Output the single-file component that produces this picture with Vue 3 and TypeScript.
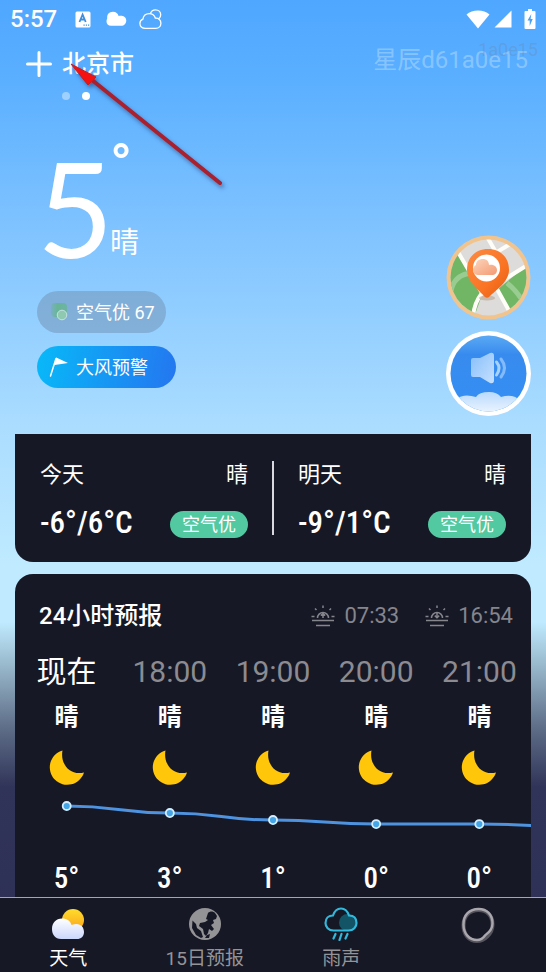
<script setup lang="ts">
import { computed } from 'vue'

interface Day {
  name: string
  sky: string
  range: string
  air: string
}

interface Hour {
  time: string
  sky: string
  temp: number
  y: number
}

const days: Day[] = [
  { name: '今天', sky: '晴', range: '-6°/6°C', air: '空气优' },
  { name: '明天', sky: '晴', range: '-9°/1°C', air: '空气优' },
]

const hours: Hour[] = [
  { time: '现在', sky: '晴', temp: 5, y: 7 },
  { time: '18:00', sky: '晴', temp: 3, y: 14 },
  { time: '19:00', sky: '晴', temp: 1, y: 21 },
  { time: '20:00', sky: '晴', temp: 0, y: 25 },
  { time: '21:00', sky: '晴', temp: 0, y: 25 },
]

const step = 103
const chartWidth = step * hours.length

const points = computed(() =>
  hours.map((h, i) => ({ x: step * i + step / 2, y: h.y })),
)

const curve = computed(() => {
  const all = [...points.value, { x: chartWidth + step / 2, y: 28 }]
  return all.reduce((d, p, i) => {
    if (i === 0) return `M${p.x} ${p.y}`
    const prev = all[i - 1]
    const mid = (prev.x + p.x) / 2
    return `${d} C${mid} ${prev.y} ${mid} ${p.y} ${p.x} ${p.y}`
  }, '')
})
</script>

<template>
  <div class="app">
    <div class="status">
      <span class="clock">5:57</span>
      <svg class="s-a" viewBox="0 0 16 17" width="16" height="17">
        <rect x="0.500" y="0.500" width="15" height="16" rx="1.500" fill="#fff" />
        <path d="M4.500 11 7.600 3.500 10.700 11M5.500 8.500h4.200" fill="none" stroke="#3f8fdc" stroke-width="1.800" />
        <path d="M8.500 14.200h1.200M10.800 14.200H12M13 14.200h1.200" stroke="#3f8fdc" stroke-width="1.200" />
      </svg>
      <svg class="s-cloud" viewBox="0 0 21 16" width="21" height="16">
        <path d="M5 14.800C2 14.800.500 12.500.500 10.400.500 9 1 8 1.300 7.300.600 3.600 3.300.800 7 .800c3 0 5 1.700 5.600 4.300 1-.500 2-.600 3.100-.300 2.700.300 4.600 2.200 4.600 4.700 0 3-2.200 5.300-5.100 5.300Z" fill="#fff" />
      </svg>
      <svg class="s-out" viewBox="0 0 23 21" width="23" height="21">
        <g fill="none" stroke="#fff" stroke-width="1.300">
          <path d="M6.200 19.300C3 19.300.900 17.200.900 14.600c0-2 1.200-3.700 3-4.400C4.400 6.800 7 4.700 10.200 4.700c3 0 5.300 1.800 6.200 4.500 3.300-.200 5.500 2 5.500 5 0 2.900-2.100 5.100-5.200 5.100Z" />
          <path d="M11.300 4.600C12.200 2 14.100.800 16.500.800c3 0 5.200 2.200 5.200 5 0 1.800-.700 3.100-1.900 4" />
        </g>
      </svg>
      <svg class="s-wifi" viewBox="0 0 24 19" width="24" height="19">
        <path d="M12 18.500.500 4.500C3.500 2 7.400.500 12 .500S20.500 2 23.500 4.500Z" fill="#fff" />
      </svg>
      <svg class="s-signal" viewBox="0 0 18 18" width="18" height="18">
        <path d="M17.500.500v17H.500Z" fill="#fff" />
      </svg>
      <svg class="s-battery" viewBox="0 0 12 20" width="12" height="20">
        <path d="M4 0h4v2h2.500a1 1 0 0 1 1 1v16a1 1 0 0 1-1 1h-9a1 1 0 0 1-1-1V3a1 1 0 0 1 1-1H4Z" fill="#fff" />
        <path d="M7.300 5 3.500 11.500h2.200V17L8.700 10H6.600Z" fill="#4d9ff0" />
      </svg>
    </div>

    <header class="header">
      <button class="add" type="button" aria-label="添加城市">
        <svg viewBox="0 0 26 26" width="26" height="26">
          <path d="M13 1.500v23M1.500 13h23" stroke="#fff" stroke-width="3" stroke-linecap="round" />
        </svg>
      </button>
      <h1 class="city">北京市</h1>
      <span class="user">星辰d61a0e15</span>
      <span class="user-ghost">1a0e15</span>
    </header>
    <div class="dots"><i></i><i class="on"></i></div>

    <section class="hero">
      <div class="now">
        <div class="reading">
          <span class="big">5</span>
          <div class="beside">
            <span class="degree">°</span>
            <span class="sky">晴</span>
          </div>
        </div>
        <button class="pill air" type="button">
          <svg viewBox="0 0 20 20" width="20" height="20">
            <defs>
              <linearGradient id="leaf" x1="0" y1="0" x2="1" y2="0">
                <stop offset="0" stop-color="#68b596" stop-opacity="0.300" />
                <stop offset="0.400" stop-color="#68b596" />
                <stop offset="1" stop-color="#68b596" stop-opacity="0.800" />
              </linearGradient>
            </defs>
            <rect x="2" y="1" width="16" height="14" rx="4" fill="url(#leaf)" />
            <circle cx="13" cy="13" r="4.800" fill="#8ec9b0" stroke="#c4e2e4" stroke-width="1" />
          </svg>
          <span>空气优 67</span>
        </button>
        <button class="pill warn" type="button">
          <svg viewBox="0 0 20 20" width="20" height="20">
            <path d="M7 1.500 1.500 19" stroke="#fff" stroke-width="1.500" stroke-linecap="round" />
            <path d="M7.200.500 19 6 5.600 8Z" fill="#fff" />
          </svg>
          <span>大风预警</span>
        </button>
      </div>
      <div class="floats">
        <button class="float" type="button" aria-label="天气地图">
          <svg viewBox="0 0 85 85" width="85" height="85">
            <defs>
              <clipPath id="mapClip"><circle cx="42.500" cy="42.500" r="38" /></clipPath>
              <linearGradient id="pin" x1="0" y1="0" x2="1" y2="1">
                <stop offset="0" stop-color="#fb8c45" />
                <stop offset="0.600" stop-color="#fa7424" />
                <stop offset="1" stop-color="#e55d12" />
              </linearGradient>
              <linearGradient id="pinCloud" x1="0" y1="0" x2="1" y2="1">
                <stop offset="0" stop-color="#fbd6bd" />
                <stop offset="1" stop-color="#f49a72" />
              </linearGradient>
            </defs>
            <circle cx="42.500" cy="42.500" r="42" fill="#f2c48d" />
            <g clip-path="url(#mapClip)">
              <rect width="85" height="85" fill="#dddcda" />
              <path d="M0 10 14 20 36 60 27 85H0Z" fill="#70b665" />
              <path d="M52 54 85 27v48L68 82Z" fill="#70b665" />
              <path d="M5 56Q8 40 25 38" fill="none" stroke="#98cc91" stroke-width="5" />
              <path d="M61 48Q70 55 78 68" fill="none" stroke="#98cc91" stroke-width="5" />
              <path d="M12 17 36 58Q28 68 27 82M51 54 66 81M40 0 51 19M85 28 54 47M51 17 66 8" fill="none" stroke="#fffdf8" stroke-width="4" />
            </g>
            <ellipse cx="41" cy="63" rx="8" ry="2.500" fill="#b4977f" opacity="0.500" />
            <path d="M42 14c12 0 21 8 21 21 0 12-13 20-20 27-1 1-3 1-4 0C33 55 21 47 21 35c0-13 9-21 21-21Z" fill="url(#pin)" />
            <circle cx="40.500" cy="33" r="13.500" fill="#fff" />
            <path d="M33 40c-4 0-6-2-6-5 0-2 1-4 3-5 0-4 3-6 7-6 3 0 6 2 6 6 5-1 8 2 8 5s-2 5-5 5Z" fill="url(#pinCloud)" />
          </svg>
        </button>
        <button class="float" type="button" aria-label="语音播报">
          <svg viewBox="0 0 85 85" width="85" height="85">
            <defs>
              <linearGradient id="blue" x1="0" y1="0" x2="0" y2="1">
                <stop offset="0" stop-color="#5ba9f4" />
                <stop offset="0.250" stop-color="#388bee" />
                <stop offset="1" stop-color="#338ff5" />
              </linearGradient>
              <linearGradient id="horn" x1="0" y1="0" x2="1" y2="1">
                <stop offset="0" stop-color="#87bffa" />
                <stop offset="1" stop-color="#c5e0ff" />
              </linearGradient>
              <linearGradient id="mist" x1="0" y1="0" x2="0" y2="1">
                <stop offset="0" stop-color="#b9dafd" />
                <stop offset="1" stop-color="#f3f9ff" />
              </linearGradient>
              <clipPath id="soundClip"><circle cx="42.500" cy="42.500" r="38" /></clipPath>
            </defs>
            <circle cx="42.500" cy="42.500" r="42.500" fill="#fff" />
            <circle cx="42.500" cy="42.500" r="38" fill="url(#blue)" />
            <g clip-path="url(#soundClip)" fill="url(#mist)">
              <path d="M10 85V68q8-6 20-2 3-5 13-5 8 0 12 5 12-4 20 4v15Z" />
            </g>
            <path d="M27 27h7l10-5q4-1 4 3v24q0 4-4 3l-10-6h-7q-2 0-2-2V29q0-2 2-2Z" fill="url(#horn)" />
            <path d="M50.500 31q5 6 0 13" fill="none" stroke="#a8d2ff" stroke-width="3" stroke-linecap="round" />
            <path d="M55 28q7 9 0 18" fill="none" stroke="#83bbfa" stroke-width="3" stroke-linecap="round" />
          </svg>
        </button>
      </div>
    </section>

    <section class="card days">
      <div v-for="d in days" :key="d.name" class="day">
        <div class="line">
          <span>{{ d.name }}</span>
          <span>{{ d.sky }}</span>
        </div>
        <div class="line">
          <span class="range">{{ d.range }}</span>
          <span class="badge">{{ d.air }}</span>
        </div>
      </div>
    </section>

    <section class="card hourly">
      <div class="hourly-head">
        <h2>24小时预报</h2>
        <div class="sun">
          <svg viewBox="0 0 24 22" width="24" height="22">
            <g fill="none" stroke="currentColor" stroke-width="1.500">
              <path d="M6.500 13a5.500 5.500 0 1 1 11 0M1 15.500h22M5 20.500h14M12 3V.500M5.500 5 4 3.500M18.500 5 20 3.500M3.500 11.500H.500M20.500 11.500h3" />
              <path d="M12 13V8.500M9.800 10.500 12 8.300l2.200 2.200" />
            </g>
          </svg>
          <span>07:33</span>
        </div>
        <div class="sun">
          <svg viewBox="0 0 24 22" width="24" height="22">
            <g fill="none" stroke="currentColor" stroke-width="1.500">
              <path d="M6.500 13a5.500 5.500 0 1 1 11 0M1 15.500h22M5 20.500h14M12 3V.500M5.500 5 4 3.500M18.500 5 20 3.500M3.500 11.500H.500M20.500 11.500h3" />
              <path d="M12 8v4.500M9.800 10.600 12 12.800l2.200-2.200" />
            </g>
          </svg>
          <span>16:54</span>
        </div>
      </div>
      <div class="hours">
        <div v-for="(h, i) in hours" :key="h.time" class="hour">
          <span class="time" :class="{ current: i === 0 }">{{ h.time }}</span>
          <span class="cond">{{ h.sky }}</span>
          <svg viewBox="0 0 36 36" width="36" height="36">
            <path d="M13.500.500A17.500 17.500 0 1 0 35 22.500C21 26 11 14 13.500.500Z" fill="#ffc60a" />
          </svg>
        </div>
      </div>
      <svg class="chart" :viewBox="`0 0 ${chartWidth} 32`">
        <path :d="curve" fill="none" stroke="#4e93df" stroke-width="3" />
        <circle v-for="p in points" :key="p.x" :cx="p.x" :cy="p.y" r="4" fill="#45a5e6" stroke="#d3efff" stroke-width="1.800" />
      </svg>
      <div class="hours temps">
        <span v-for="h in hours" :key="h.time">{{ h.temp }}°</span>
      </div>
    </section>

    <nav class="tabs">
      <a href="#weather" class="tab active">
        <svg viewBox="0 0 34 34" width="34" height="34">
          <defs>
            <linearGradient id="sunFill" x1="0" y1="0" x2="0" y2="1">
              <stop offset="0" stop-color="#ffdc2b" />
              <stop offset="1" stop-color="#f9a21c" />
            </linearGradient>
            <linearGradient id="cloudFill" x1="0" y1="0" x2="0" y2="1">
              <stop offset="0" stop-color="#fff" />
              <stop offset="1" stop-color="#cbd6fc" />
            </linearGradient>
          </defs>
          <circle cx="22" cy="13" r="11" fill="url(#sunFill)" />
          <path d="M10 32C4 32 1 27.500 1 22c0-6 4-10.500 10-10.500 5 0 8.500 2.500 9.500 6.500 8-3 12.500 1.500 12.500 7 0 4.500-3 7-7 7Z" fill="url(#cloudFill)" />
        </svg>
        <span>天气</span>
      </a>
      <a href="#fifteen" class="tab">
        <svg viewBox="0 0 34 34" width="34" height="34">
          <circle cx="17" cy="17" r="16" fill="#949496" />
          <path d="M20 6c2-2 5-2 7 0l2 3-1 3-3 1 1 3-3 2 3 4-2 2-3-2-1 4-2 3-2-2-1-5-4-3 1-3 5-1 3-2-2-1 1-3ZM4.500 13.500 8 17l1 4 4 3 2 6-2 1-5-3-4-7Z" fill="#171826" />
          <path d="m17 31 2-3 3-1-1 4Z" fill="#171826" />
        </svg>
        <span>15日预报</span>
      </a>
      <a href="#rain" class="tab">
        <svg viewBox="0 0 34 34" width="34" height="34">
          <circle cx="23.500" cy="15.500" r="8.500" fill="#135467" />
          <path d="M9.500 23.500C4.500 23.500 1.500 20 1.500 16c0-4.500 3-7.500 7.500-7.500C10.500 4 13.500 1.500 17 1.500S23.500 4 25 8.500c5 0 7.500 3 7.500 7.500 0 4-3 7.500-8 7.500Z" fill="none" stroke="#31b8da" stroke-width="2.200" />
          <path d="m11.500 27-2 4.500M17.500 27l-2 6M23.500 27l-2 4.500" stroke="#31b8da" stroke-width="2.200" stroke-linecap="round" />
        </svg>
        <span>雨声</span>
      </a>
      <a href="#mine" class="tab" aria-label="我的">
        <svg viewBox="0 0 34 36" width="34" height="36">
          <path d="M17.500 3C8.500 3 2.500 9 2.500 18.500 2.500 27.500 8 34 16 34c7 0 15.500-7 15.500-16.500C31.500 8.500 26 3 17.500 3Z" fill="none" stroke="#55535c" stroke-width="4" />
          <path d="M17.500 2C8.500 2 2.500 8 2.500 17.500 2.500 26.500 8 33 16 33c3.500 0 6-1.500 8-4.500 4-3.500 7.500-6 7.500-12C31.500 7.500 26 2 17.500 2Z" fill="none" stroke="#a9a7ad" stroke-width="2.400" />
        </svg>
      </a>
    </nav>

    <svg class="pointer" viewBox="0 0 160 130" width="160" height="130">
      <path d="M24 19 152 122" stroke="#a9202f" stroke-width="4" stroke-linecap="round" />
      <path d="M3 3 28 16 20 24Z" fill="#f4110f" stroke="#c51e22" stroke-width="1" />
    </svg>
  </div>
</template>

<style>
body {
  margin: 0;
  background: #171826;
}
</style>

<style scoped>
.app {
  position: relative;
  display: flex;
  flex-direction: column;
  min-height: 100vh;
  overflow: hidden;
  color: #fff;
  font-family: Roboto, "Noto Sans CJK SC", sans-serif;
  background: linear-gradient(
    180deg,
    #4fa7ff 0%,
    #5aafff 8%,
    #7cc1ff 22%,
    #abddff 44%,
    #bfeaff 58%,
    #bfeaff 64%,
    #94b2c5 69%,
    #5d6c87 75%,
    #303458 81%,
    #2d3054 100%
  );
}

svg {
  display: block;
  flex: none;
}

button {
  padding: 0;
  border: 0;
  background: none;
  color: inherit;
  font: inherit;
  cursor: pointer;
}

.status {
  display: flex;
  align-items: center;
  height: 38px;
  padding: 0 10px;
}

.clock {
  font-size: 24px;
  font-weight: 500;
  line-height: 28px;
}

.s-a { margin-left: 18px; }
.s-cloud { margin-left: 15px; }
.s-out { margin-left: 12px; }
.s-wifi { margin-left: auto; }
.s-signal { margin-left: 4px; }
.s-battery { margin-left: 12px; }

.header {
  position: relative;
  display: flex;
  align-items: center;
  height: 52px;
  padding: 0 18px 0 26px;
}

.city {
  margin: 0 auto 0 10px;
  font-size: 24px;
  font-weight: 500;
  line-height: 30px;
}

.user {
  color: rgba(255, 255, 255, 0.3);
  font-size: 24px;
  line-height: 30px;
  padding-bottom: 8px;
}

.user-ghost {
  position: absolute;
  top: 2px;
  right: 8px;
  color: rgba(110, 130, 160, 0.3);
  font-size: 18px;
  line-height: 20px;
}

.dots {
  display: flex;
  align-items: center;
  gap: 12px;
  height: 12px;
  padding-left: 62px;
}

.dots i {
  width: 8px;
  height: 8px;
  border-radius: 50%;
  background: rgba(255, 255, 255, 0.4);
}

.dots .on {
  background: #fff;
}

.hero {
  display: flex;
  justify-content: space-between;
  padding: 43px 15px 18px 37px;
}

.now {
  display: flex;
  flex-direction: column;
  align-items: flex-start;
}

.reading {
  display: flex;
  height: 136px;
  margin-bottom: 10px;
}

.big {
  width: 73px;
  font-family: Lato, Roboto, sans-serif;
  font-size: 132px;
  line-height: 124px;
}

.beside {
  display: flex;
  flex-direction: column;
  justify-content: space-between;
  padding-bottom: 18px;
}

.degree {
  font-size: 58px;
  font-weight: 500;
  line-height: 40px;
}

.sky {
  font-size: 29px;
  line-height: 40px;
}

.pill {
  display: flex;
  align-items: center;
  gap: 7px;
  height: 42px;
  padding: 0 11px 0 12px;
  border-radius: 21px;
  font-size: 18px;
  line-height: 24px;
}

.pill span {
  padding-top: 2px;
}

.air {
  background: rgba(112, 144, 178, 0.5);
}

.warn {
  margin-top: 13px;
  padding-right: 28px;
  background: linear-gradient(100deg, #08b9f8, #2476f0);
}

.floats {
  display: flex;
  flex-direction: column;
  gap: 11px;
  padding-top: 90px;
}

.float {
  border-radius: 50%;
}

.card {
  margin: 0 15px;
  background: #171826;
}

.days {
  display: flex;
  padding: 22px 0 26px;
  border-radius: 0 0 18px 18px;
}

.day {
  flex: 1;
  display: flex;
  flex-direction: column;
  gap: 18px;
  height: 80px;
  padding: 0 25px;
}

.day + .day {
  position: relative;
}

.day + .day::before {
  content: "";
  position: absolute;
  left: -1px;
  top: 5px;
  width: 2px;
  height: 74px;
  background: #d8d8de;
}

.line {
  display: flex;
  align-items: center;
  justify-content: space-between;
  height: 31px;
  font-size: 22px;
}

.range {
  margin-top: 4px;
  font-family: "Roboto Condensed", "Liberation Sans", sans-serif;
  font-size: 31px;
  font-weight: 500;
  line-height: 31px;
}

.badge {
  margin-top: 8px;
  padding: 0 12px;
  border-radius: 14px;
  background: #52c9a0;
  font-size: 18px;
  line-height: 27px;
}

.hourly {
  flex: 1;
  margin-top: 12px;
  border-radius: 18px 18px 0 0;
  overflow: hidden;
}

.hourly-head {
  display: flex;
  align-items: center;
  height: 44px;
  padding: 20px 18px 0 24px;
}

.hourly-head h2 {
  margin: 0 auto 0 0;
  font-size: 24px;
  font-weight: 500;
  line-height: 30px;
}

.sun {
  display: flex;
  align-items: center;
  gap: 9px;
  margin-left: 26px;
  color: #85858c;
  font-size: 22px;
  line-height: 26px;
}

.hours {
  display: grid;
  grid-template-columns: repeat(5, 1fr);
  text-align: center;
}

.hour {
  display: flex;
  flex-direction: column;
  align-items: center;
}

.time {
  margin-top: 14px;
  color: #8b8b91;
  font-size: 30px;
  line-height: 40px;
}

.current {
  color: #fff;
}

.cond {
  margin: 10px 0 18px;
  font-size: 24px;
  font-weight: 700;
  line-height: 30px;
}

.chart {
  width: 100%;
  margin-top: 13px;
}

.temps {
  padding: 31px 0 3px;
  font-family: "Roboto Condensed", "Liberation Sans", sans-serif;
  font-size: 29px;
  font-weight: 500;
  line-height: 32px;
}

.tabs {
  display: grid;
  grid-template-columns: repeat(4, 1fr);
  height: 74px;
  border-top: 1px solid #a5a5ad;
  background: #171826;
}

.tab {
  display: flex;
  flex-direction: column;
  align-items: center;
  gap: 6px;
  padding-top: 9px;
  color: #949497;
  font-size: 19px;
  line-height: 24px;
  text-decoration: none;
}

.active {
  color: #fff;
}

.pointer {
  position: absolute;
  top: 61px;
  left: 68px;
  pointer-events: none;
  filter: drop-shadow(2px 3px 2px rgba(20, 40, 90, 0.5));
}
</style>
